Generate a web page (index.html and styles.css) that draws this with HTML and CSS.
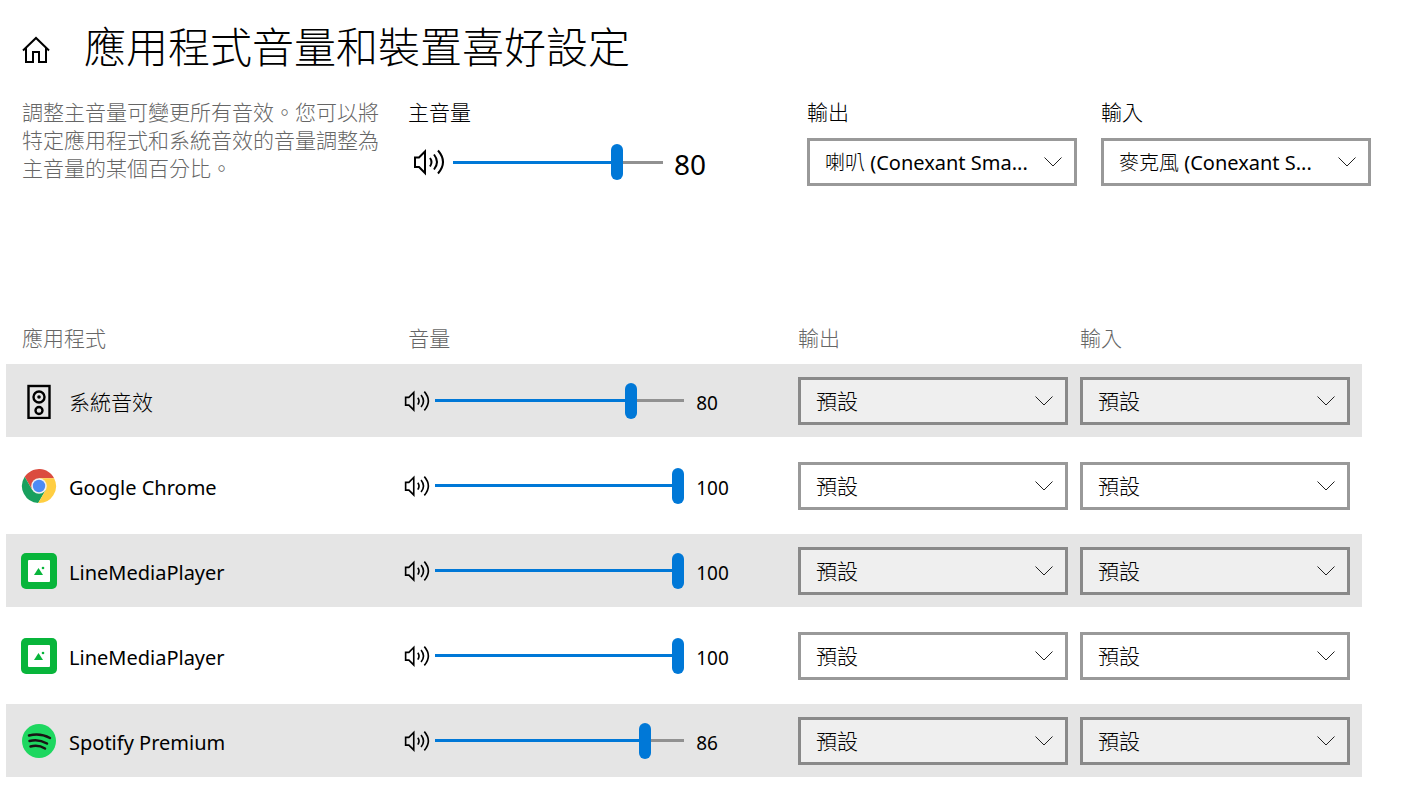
FILE: index.html
```html
<!DOCTYPE html>
<html lang="zh-TW">
<head>
  <meta charset="UTF-8" />
  <meta name="viewport" content="width=device-width, initial-scale=1.0" />
  <title>應用程式音量和裝置喜好設定</title>
  <link rel="stylesheet" href="styles.css">
</head>
<body>
  <!-- shared icons -->
  <svg class="sprite" aria-hidden="true">
    <symbol id="speaker" viewBox="0 0 32 28">
      <path d="M2 9.500v9.500h4l6 6V3.500l-6 6z M17 10q3 4 0 8.500 M21 6.500q6 7.500 0 15 M25 2.500q10 11.500 0 23" fill="none" stroke="#000" stroke-width="2" />
    </symbol>
    <symbol id="chevron" viewBox="0 0 18 10">
      <path d="M.5.5l8.500 8.500L17.500.5" fill="none" stroke="#222" stroke-width="1" />
    </symbol>
    <symbol id="line" viewBox="0 0 36 36">
      <rect width="36" height="36" rx="5" fill="#08b53b" />
      <rect x="7" y="7" width="22" height="22" rx="1" fill="#fff" />
      <path d="M13 22l4.500-7 4.500 7z" fill="#08b53b" />
      <circle cx="22" cy="15" r="1.300" fill="#08b53b" />
    </symbol>
  </svg>

  <header class="title-bar">
    <a class="home" href="#" aria-label="首頁">
      <svg viewBox="0 0 28 28" width="28" height="28"><path d="M1 14.500L14 2l13 12.500M4 12v14h7V16h6v10h7V12" fill="none" stroke="#000" stroke-width="2" /></svg>
    </a>
    <h1>應用程式音量和裝置喜好設定</h1>
  </header>

  <section class="master">
    <p class="description">調整主音量可變更所有音效。您可以將特定應用程式和系統音效的音量調整為主音量的某個百分比。</p>
    <div class="master-volume">
      <label for="masterVolume">主音量</label>
      <div class="volume volume-large">
        <svg class="speaker"><use href="#speaker" /></svg>
        <input type="range" id="masterVolume" min="0" max="100" value="80" style="--value: 80" />
        <output for="masterVolume">80</output>
      </div>
    </div>
    <div class="device">
      <label for="masterOutput">輸出</label>
      <div class="select-box">
        <select id="masterOutput"><option>喇叭 (Conexant Sma...</option></select>
        <svg class="chevron"><use href="#chevron" /></svg>
      </div>
    </div>
    <div class="device">
      <label for="masterInput">輸入</label>
      <div class="select-box">
        <select id="masterInput"><option>麥克風 (Conexant S...</option></select>
        <svg class="chevron"><use href="#chevron" /></svg>
      </div>
    </div>
  </section>

  <table class="apps">
    <thead>
      <tr>
        <th class="col-app">應用程式</th>
        <th class="col-volume">音量</th>
        <th class="col-device">輸出</th>
        <th class="col-device">輸入</th>
      </tr>
    </thead>
    <tbody id="appList"></tbody>
  </table>

  <script src="script.js"></script>
</body>
</html>
```
FILE: styles.css
```css
* { box-sizing: border-box; }
body {
  margin: 0;
  padding: 15px 34px 16px 6px;
  background: #fff;
  color: #000;
  font-family: "Noto Sans", "Noto Sans CJK TC Light", "Noto Sans CJK TC", sans-serif;
  font-size: 20px;
  line-height: 28px;
}
label, th, .description { font-size: 21px; font-weight: 300; }
svg { display: block; flex: none; }
.sprite { width: 0; height: 0; position: absolute; }

.title-bar { display: flex; align-items: center; gap: 34px; padding-left: 16px; }
.home { padding-top: 6px; }
h1 { margin: 0; font-size: 42px; line-height: 64px; font-weight: 300; }

.master { display: grid; grid-template-columns: 362px 1fr 270px 270px; column-gap: 24px; padding-left: 16px; margin-top: 19px; }
.description { margin: 0; color: #666; }
label { display: block; }
.device label { margin-bottom: 12px; }
.master-volume label { margin-bottom: 18px; }

.volume { display: flex; align-items: center; }
.volume .speaker { width: 26px; height: 24px; margin-right: 5px; }
.volume input { width: 249px; }
.volume output { margin-left: 12px; padding-top: 4px; font-size: 19px; }
.volume-large { padding-left: 5px; }
.volume-large .speaker { width: 32px; height: 28px; margin-right: 8px; }
.volume-large input { width: 210px; }
.volume-large output { font-size: 28px; margin-left: 11px; }

input[type="range"] {
  appearance: none;
  height: 36px;
  margin: 0;
  background: linear-gradient(#0078d7, #0078d7) left center / calc(var(--value) * 1%) 3px no-repeat,
    linear-gradient(#919191, #919191) center / 100% 3px no-repeat;
}
input[type="range"]::-webkit-slider-thumb { appearance: none; width: 12px; height: 36px; border-radius: 6px; background: #0078d7; }

.select-box { display: grid; align-items: center; }
.select-box select, .select-box .chevron { grid-area: 1 / 1; }
select {
  appearance: none;
  width: 100%;
  height: 48px;
  padding: 0 40px 0 15px;
  border: 3px solid #999;
  border-radius: 0;
  background: #fff;
  color: #000;
  font-family: inherit;
  font-size: 20px;
}
td select { font-size: 21px; }
.chevron { width: 18px; height: 10px; justify-self: end; margin-right: 15px; pointer-events: none; }

.apps { width: calc(100% - 9px); margin-top: 126px; table-layout: fixed; border-collapse: separate; border-spacing: 0 12px; }
th { padding: 0; text-align: left; color: #666; }
.col-app { width: 29%; padding-left: 16px; }
.col-volume { padding-left: 9px; }
.col-device { width: 282px; }
td { height: 73px; padding: 0; }
.app { display: flex; align-items: center; padding-left: 15px; gap: 12px; }
.app label { padding-top: 4px; font-size: 20px; font-weight: 400; }
.app .system { padding-top: 2px; font-size: 21px; font-weight: 300; }
.app-icon { width: 36px; height: 36px; }
td .volume { padding-left: 5px; }
td .select-box { margin-right: 12px; }
tbody tr:nth-child(odd) { background: #e5e5e5; }
tbody tr:nth-child(odd) select { background: #efefef; border-color: #898989; }
```
FILE: script.js
```js
const icons = {
  system: `<rect x="7.500" y="3" width="21" height="32" fill="none" stroke="#000" stroke-width="2.400" />
    <circle cx="18" cy="14" r="5.500" fill="none" stroke="#000" stroke-width="2.400" /><circle cx="18" cy="14" r="1.800" />
    <circle cx="18" cy="27.500" r="3.500" fill="none" stroke="#000" stroke-width="2.400" />`,
  chrome: `<path d="M3.700 8.800A17 17 0 0 1 33.100 10.200H18L11.250 21.900z" fill="#db4c3f" />
    <path d="M3.700 8.800A17 17 0 0 0 17.200 35L24.750 21.900H11.250z" fill="#18a05e" />
    <path d="M33.100 10.200A17 17 0 0 1 17.200 35L24.750 21.900 18 10.200z" fill="#ffce42" />
    <circle cx="18" cy="18" r="7.800" fill="#f1f1f1" /><circle cx="18" cy="18" r="6.200" fill="#4c8bf5" />`,
  line: `<use href="#line" />`,
  spotify: `<circle cx="18" cy="18" r="17" fill="#1ed760" />
    <path d="M8 12.500q11-3 21 2.500M8.500 18q9-2.500 17.500 2.500M9.500 23.500q8-2 14.500 2" fill="none" stroke="#191414" stroke-width="2.500" stroke-linecap="round" />`
};

const apps = [
  { name: "系統音效", icon: "system", volume: 80 },
  { name: "Google Chrome", icon: "chrome", volume: 100 },
  { name: "LineMediaPlayer", icon: "line", volume: 100 },
  { name: "LineMediaPlayer", icon: "line", volume: 100 },
  { name: "Spotify Premium", icon: "spotify", volume: 86 }
];

function deviceSelect(label) {
  return `<div class="select-box">
    <select aria-label="${label}"><option>預設</option></select>
    <svg class="chevron"><use href="#chevron" /></svg>
  </div>`;
}

document.getElementById("appList").innerHTML = apps.map((app, i) => `
  <tr>
    <td><div class="app">
      <svg class="app-icon" viewBox="0 0 36 36">${icons[app.icon]}</svg>
      <label class="${app.icon}" for="volume${i}">${app.name}</label>
    </div></td>
    <td><div class="volume">
      <svg class="speaker"><use href="#speaker" /></svg>
      <input type="range" id="volume${i}" min="0" max="100" value="${app.volume}" style="--value: ${app.volume}" />
      <output for="volume${i}">${app.volume}</output>
    </div></td>
    <td>${deviceSelect(app.name + " 輸出")}</td>
    <td>${deviceSelect(app.name + " 輸入")}</td>
  </tr>`).join("");

document.querySelectorAll("input[type=range]").forEach(range => {
  range.addEventListener("input", () => {
    range.style.setProperty("--value", range.value);
    range.nextElementSibling.value = range.value;
  });
});
```
